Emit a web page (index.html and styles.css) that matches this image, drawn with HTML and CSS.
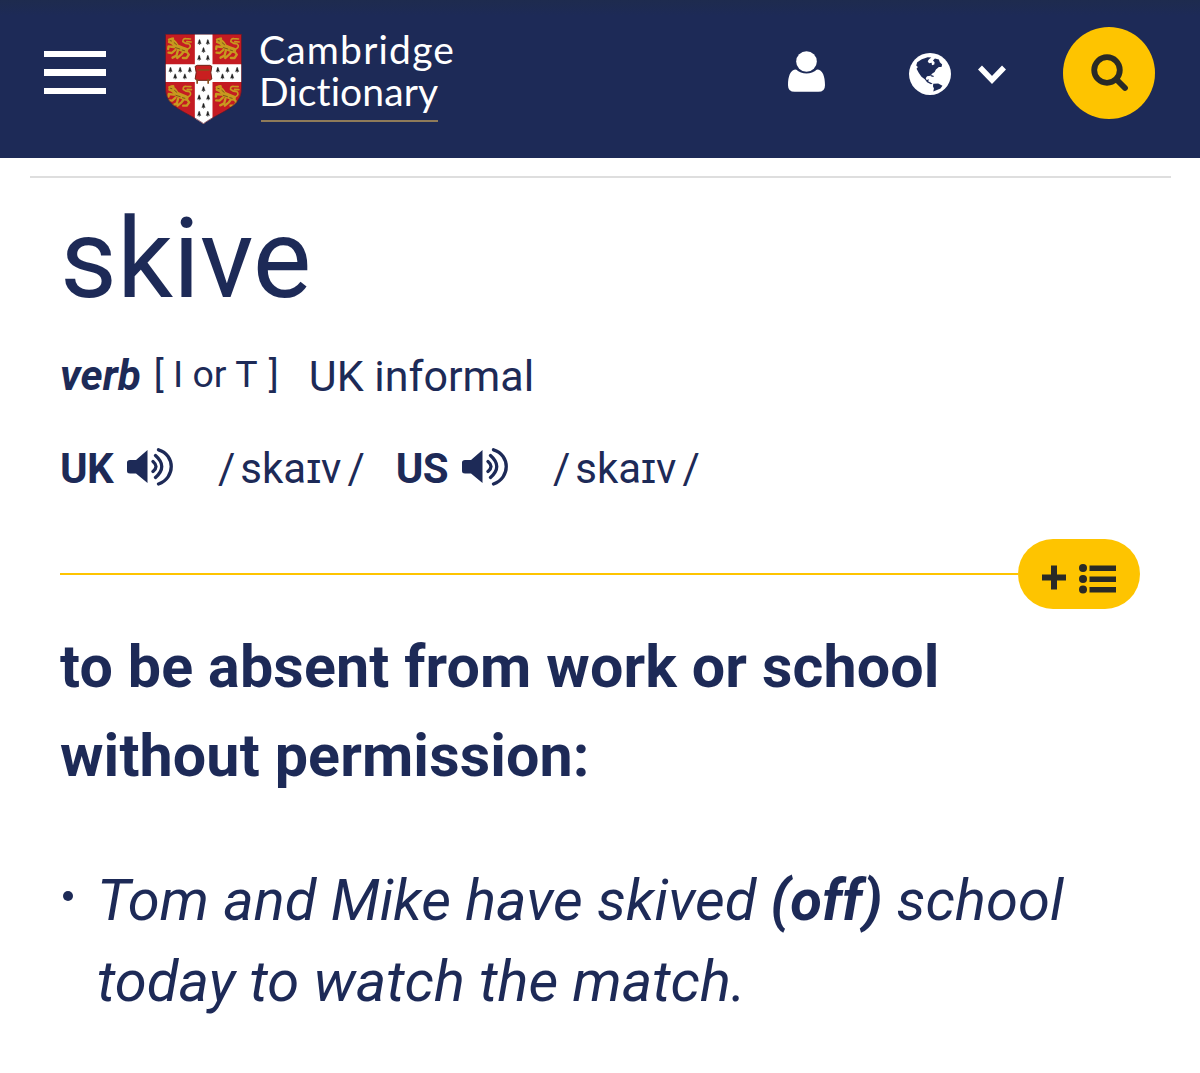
FILE: index.html
```html
<!DOCTYPE html>
<html lang="en">

<head>
    <meta charset="UTF-8">
    <meta name="viewport" content="width=device-width, initial-scale=1.0">
    <title>skive | Cambridge Dictionary</title>
    <link rel="stylesheet" href="styles.css">
</head>

<body>
    <header class="header">
        <button class="menu" aria-label="Menu">
            <span></span>
            <span></span>
            <span></span>
        </button>

        <a class="logo" href="#">
            <svg class="shield" viewBox="45 43 230 270">
                <defs>
                    <clipPath id="shieldClip">
                        <path d="M45 43H275V205C275 265 210 275 160 313C110 275 45 265 45 205Z" />
                    </clipPath>
                    <g id="lion" fill="none" stroke="#c8991f" stroke-width="7" stroke-linecap="round" stroke-linejoin="round">
                        <path d="M14 14Q24 22 29 32Q44 38 56 43" stroke-width="16" />
                        <path d="M7 11L18 8M7 18L15 20" stroke-width="8" />
                        <path d="M20 33L5 31L4 39M25 42L15 51L5 50M33 44L29 59L17 65M57 44L66 56L59 66L48 66M50 47L43 56L31 66" />
                        <path d="M62 40Q76 33 67 24Q56 24 48 17Q48 7 57 8L71 9M60 17L73 18" stroke-width="5" />
                        <path d="M10 14L14 15M22 20L29 26M26 35L39 39M46 42L53 44" stroke="#6b4b16" stroke-width="2.500" />
                    </g>
                    <path id="ermine" d="M0 -9L2 -4L5 5L1 3L0 8L-1 3L-5 5L-2 -4ZM-3 -5H3" fill="#222" stroke="#222" stroke-width="1" />
                </defs>
                <g clip-path="url(#shieldClip)">
                    <path d="M45 43H275V313H45Z" fill="#c41b22" />
                    <path d="M134 43H187V313H134ZM45 134H275V187H45Z" fill="#fff" />
                    <use href="#lion" x="50" y="49" />
                    <use href="#lion" x="194" y="49" />
                    <use href="#lion" x="51" y="192" />
                    <use href="#lion" x="193" y="192" />
                    <use href="#ermine" x="148" y="68" />
                    <use href="#ermine" x="173" y="68" />
                    <use href="#ermine" x="160" y="92" />
                    <use href="#ermine" x="147" y="115" />
                    <use href="#ermine" x="173" y="115" />
                    <use href="#ermine" x="61" y="151" />
                    <use href="#ermine" x="90" y="151" />
                    <use href="#ermine" x="119" y="151" />
                    <use href="#ermine" x="75" y="171" />
                    <use href="#ermine" x="104" y="171" />
                    <use href="#ermine" x="203" y="151" />
                    <use href="#ermine" x="232" y="151" />
                    <use href="#ermine" x="261" y="151" />
                    <use href="#ermine" x="217" y="171" />
                    <use href="#ermine" x="246" y="171" />
                    <use href="#ermine" x="160" y="209" />
                    <use href="#ermine" x="147" y="234" />
                    <use href="#ermine" x="174" y="234" />
                    <use href="#ermine" x="160" y="259" />
                    <use href="#ermine" x="147" y="283" />
                    <use href="#ermine" x="173" y="283" />
                    <path d="M135 140L141 137H179L185 140L182 159L185 178L179 182H141L135 178L138 159Z" fill="#c91f20" stroke="#6f2418" stroke-width="3" />
                    <path d="M143 151H178M141 178V192M174 178V192" fill="none" stroke="#87501d" stroke-width="5" />
                </g>
                <path d="M46 44H274V205C274 265 210 275 160 312C110 275 46 265 46 205Z" fill="none" stroke="#4d1b2c" stroke-width="2" />
            </svg>
            <span class="logo-text">
                <span class="logo-cambridge">Cambridge</span>
                <span class="logo-dictionary">Dictionary</span>
            </span>
        </a>

        <nav class="tools">
            <svg class="icon-user" viewBox="0 0 111 122">
                <path d="M24 55C7 55 0 76 0 102Q0 122 20 122H91Q111 122 111 102C111 76 104 55 87 55C69 71 42 71 24 55Z" />
                <circle cx="55.500" cy="31" r="31" />
            </svg>
            <svg class="icon-globe" viewBox="0 0 128 128">
                <circle cx="64" cy="64" r="64" fill="#fff" />
                <path d="M25 28L39 19L57 13L68 14L61 19L57 25L61 31L69 30L70 37L77 35L78 28L73 23L79 17L91 20L94 28L101 35L99 43L91 43L82 50L78 58L70 63L66 69L55 71L51 77L54 83L60 79L59 87L67 91L72 94L67 95L55 89L48 80L38 72L30 61L23 48L27 43L22 38Z" fill="#1d2a57" />
                <path d="M68 67L76 70L74 73L66 71ZM74 94L89 93L102 100L96 108L87 112L74 117L76 108L73 101Z" fill="#1d2a57" />
            </svg>
            <svg class="icon-chevron" viewBox="0 0 30 20">
                <path d="M3 3.500L15 16L27 3.500" />
            </svg>
            <button class="search" aria-label="Search">
                <svg viewBox="0 0 38 38">
                    <circle cx="16" cy="16" r="12.800" />
                    <path d="M25.500 25.500L34 34" />
                </svg>
            </button>
        </nav>
    </header>

    <main class="entry">
        <h1 class="headword">skive</h1>

        <div class="grammar">
            <span class="pos">verb</span>
            <span class="code">[ <span class="code-text">I or T</span> ]</span>
            <span class="usage">UK informal</span>
        </div>

        <div class="pronunciations">
            <div class="pron">
                <span class="region">UK</span>
                <svg class="icon-sound" viewBox="0 0 46 38">
                    <path d="M0 14.500Q0 12 3 12H9L20.500 2V35L9 25.500H3Q0 25.500 0 23Z" />
                    <path class="wave" d="M26 13.500Q32 18.500 26 23.500M28.500 7.500Q41 18.500 28.500 29.500M31.500 1.800C48.500 7 48.500 30 31.500 36" />
                </svg>
                <span class="ipa">/<span class="sounds">skaɪv</span>/</span>
            </div>
            <div class="pron">
                <span class="region">US</span>
                <svg class="icon-sound" viewBox="0 0 46 38">
                    <path d="M0 14.500Q0 12 3 12H9L20.500 2V35L9 25.500H3Q0 25.500 0 23Z" />
                    <path class="wave" d="M26 13.500Q32 18.500 26 23.500M28.500 7.500Q41 18.500 28.500 29.500M31.500 1.800C48.500 7 48.500 30 31.500 36" />
                </svg>
                <span class="ipa">/<span class="sounds">skaɪv</span>/</span>
            </div>
        </div>

        <div class="divider">
            <button class="add-list" aria-label="Add to word list">
                <svg viewBox="0 0 74 30">
                    <path d="M9 1.500H15V10.500H24V16.500H15V25.500H9V16.500H0V10.500H9Z" />
                    <path d="M47.500 1.500H74V7H47.500ZM47.500 12.500H74V18H47.500ZM47.500 23H74V28.500H47.500Z" />
                    <circle cx="41" cy="4" r="4" />
                    <circle cx="41" cy="15" r="4" />
                    <circle cx="41" cy="25.500" r="4" />
                </svg>
            </button>
        </div>

        <h2 class="definition">to be absent from work or school<br>without permission:</h2>

        <ul class="examples">
            <li>Tom and Mike have skived <b>(off)</b> school<br>today to watch the match.</li>
        </ul>
    </main>
</body>

</html>
```
FILE: styles.css
```css
* {
    box-sizing: border-box;
    margin: 0;
    padding: 0;
}

body {
    background-color: #fff;
    color: #1d2a57;
    font-family: Roboto, sans-serif;
}

button {
    border: none;
    cursor: pointer;
}

svg {
    display: block;
    flex: none;
}

.header {
    display: flex;
    align-items: flex-start;
    height: 158px;
    padding: 0 45px 0 44px;
    background: linear-gradient(#1e2b4e, #1d2a57 16px);
}

.menu {
    display: flex;
    flex-direction: column;
    gap: 12px;
    width: 62px;
    margin-top: 51px;
    background: none;
}

.menu span {
    height: 6.400px;
    background-color: #fff;
}

.logo {
    display: flex;
    margin-left: 59px;
    color: #fff;
    text-decoration: none;
}

.shield {
    width: 77px;
    height: 90px;
    margin-top: 34px;
}

.logo-text {
    display: flex;
    flex-direction: column;
    align-items: flex-start;
    margin: 28px 0 0 17px;
    font-family: Lato, sans-serif;
    font-size: 39px;
    font-variant-ligatures: none;
    line-height: 42px;
}

.logo-cambridge {
    letter-spacing: 1.200px;
}

.logo-dictionary {
    width: 177px;
    height: 52px;
    margin-left: 2px;
    border-bottom: 2.500px solid #8f7b59;
    letter-spacing: 0.100px;
    text-indent: -2px;
}

.tools {
    display: flex;
    margin-left: auto;
    fill: #fff;
}

.icon-user {
    width: 37px;
    height: 41px;
    margin-top: 51px;
}

.icon-globe {
    width: 42px;
    height: 42px;
    margin: 53px 0 0 84px;
}

.icon-chevron {
    width: 30px;
    height: 20px;
    margin: 64px 0 0 26px;
    fill: none;
    stroke: #fff;
    stroke-width: 5.500;
}

.search {
    display: flex;
    align-items: center;
    justify-content: center;
    width: 92px;
    height: 92px;
    margin: 27px 0 0 56px;
    border-radius: 50%;
    background-color: #fec400;
}

.search svg {
    width: 38px;
    height: 38px;
    margin-left: 2px;
    fill: none;
    stroke: #292a26;
    stroke-width: 5.800;
    stroke-linecap: round;
}

.entry {
    margin: 18px 29px 0 30px;
    padding: 0 31px 0 30px;
    border-top: 2px solid #dedede;
}

.headword {
    margin-top: 15px;
    font-size: 110.500px;
    font-weight: 400;
    line-height: 132px;
}

.grammar {
    display: flex;
    align-items: flex-start;
    margin-top: 26px;
    font-size: 43px;
    line-height: 50px;
}

.pos {
    font-size: 42.300px;
    font-style: italic;
    font-weight: 700;
}

.code {
    margin-left: 13px;
    font-size: 37.500px;
    line-height: 47px;
}

.code-text {
    margin-right: 2px;
}

.usage {
    margin-left: 30px;
}

.pronunciations {
    display: flex;
    gap: 31px;
    margin-top: 43px;
    font-size: 42px;
    line-height: 50px;
}

.pron {
    display: flex;
}

.region {
    font-weight: 700;
    letter-spacing: -0.700px;
}

.icon-sound {
    width: 46px;
    height: 38px;
    margin: 4px 0 0 14px;
    fill: #1d2a57;
}

.wave {
    fill: none;
    stroke: #1d2a57;
    stroke-width: 3.300;
    stroke-linecap: round;
}

.ipa {
    margin-left: 45px;
}

.sounds {
    margin: 0 6px 0 5px;
}

.divider {
    display: flex;
    align-items: center;
    margin-top: 45px;
}

.divider::before {
    content: "";
    flex: 1;
    height: 2px;
    background-color: #fec400;
}

.add-list {
    width: 122px;
    height: 70px;
    padding: 9px 24px 0;
    border-radius: 35px;
    background-color: #fec400;
}

.add-list svg {
    width: 74px;
    height: 30px;
    fill: #292a26;
}

.definition {
    margin-top: 13px;
    font-size: 59.200px;
    font-weight: 700;
    line-height: 89px;
    letter-spacing: 0.130px;
}

.examples {
    margin-top: 60px;
    list-style: none;
    font-size: 57.900px;
    font-style: italic;
    line-height: 81px;
}

.examples li {
    display: block;
    position: relative;
    padding-left: 37px;
}

.examples li::before {
    content: "";
    position: absolute;
    top: 31px;
    left: 3px;
    width: 10px;
    height: 10px;
    border-radius: 50%;
    background-color: #1d2a57;
}
```
